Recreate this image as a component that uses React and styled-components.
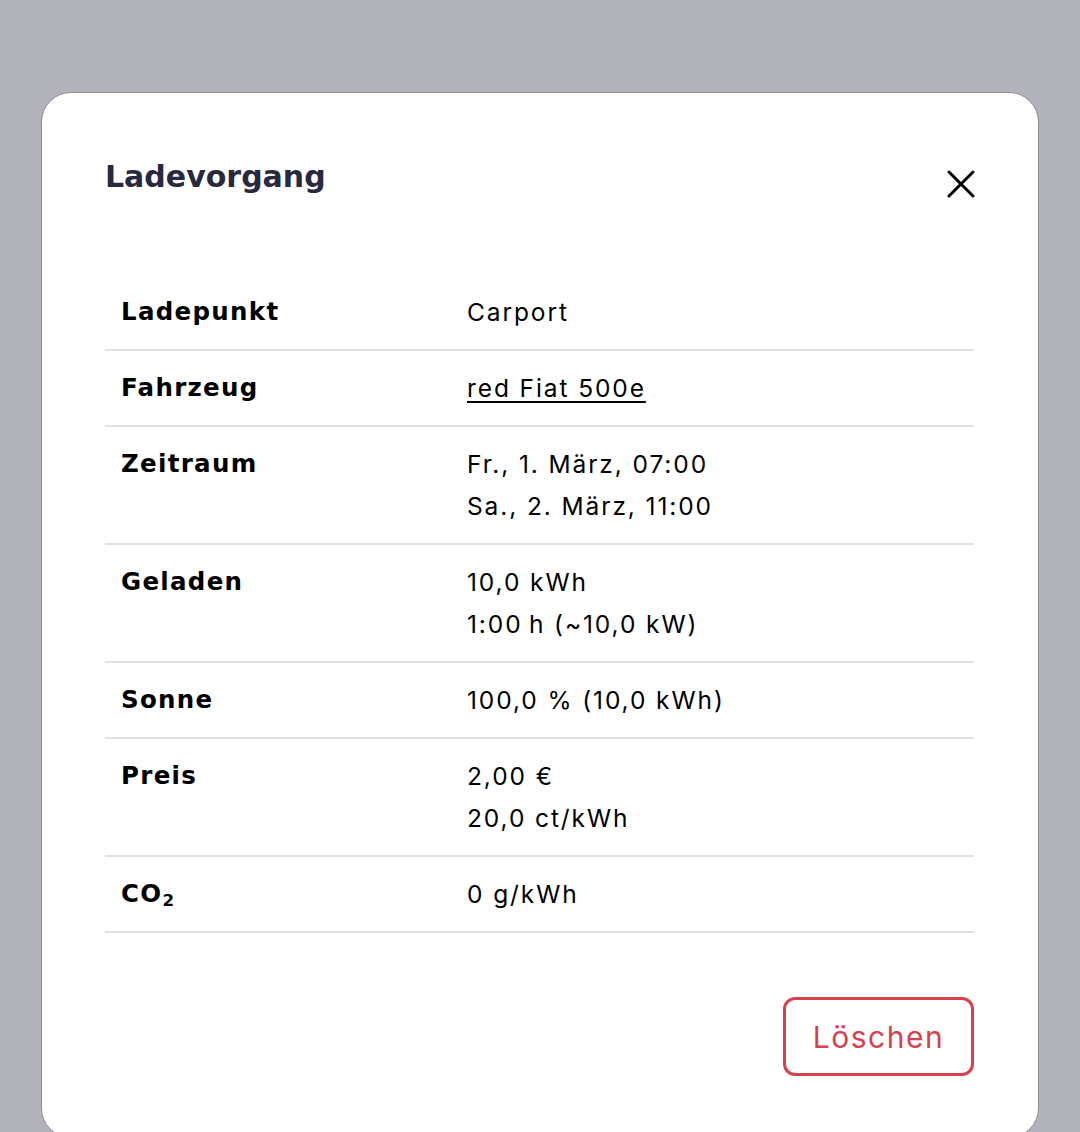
import React from 'react'
import styled, { createGlobalStyle } from 'styled-components'

const GlobalStyle = createGlobalStyle`
body {
  margin: 0;
  background: #b2b3ba;
  font-family: Inter, "Noto Sans", sans-serif;
  overflow: hidden;
}
`

const Backdrop = styled.div`
height: 1132px;
padding: 92px 41px 0 41px;
box-sizing: border-box;
overflow: hidden;
`

const Modal = styled.div`
background: #fff;
border: 1.5px solid #8d8e93;
border-radius: 30px;
padding: 0 64px 40px 63px;
min-height: 1046px;
box-sizing: border-box;
`

const Header = styled.div`
display: flex;
justify-content: space-between;
align-items: flex-start;
padding-top: 64px;
margin-bottom: 77px;
`

const Title = styled.h2`
margin: 0;
font-family: "DejaVu Sans", Inter, sans-serif;
font-size: 30px;
line-height: 40px;
font-weight: 700;
color: #28293e;
`

const Close = styled.button`
background: none;
border: none;
padding: 0;
margin-top: 13px;
margin-right: -1px;
width: 28px;
height: 28px;
display: flex;
align-items: center;
justify-content: center;
cursor: pointer;
`

const Table = styled.div`
display: flex;
flex-direction: column;
`

const Row = styled.div`
display: grid;
grid-template-columns: 346px 1fr;
padding: 16px 16px;
border-bottom: 2px solid #e1e1e3;
font-size: 24px;
line-height: 42px;
color: #000;
`

const Label = styled.div`
font-family: "DejaVu Sans", Inter, sans-serif;
font-size: 24.5px;
font-weight: 700;
letter-spacing: 1.3px;
`

const Sub = styled.sub`
font-size: 0.68em;
line-height: 0;
vertical-align: -0.25em;
letter-spacing: 0;
`

const Value = styled.div`
display: flex;
flex-direction: column;
font-size: 24.5px;
letter-spacing: 1.9px;
`

const Link = styled.a`
color: #000;
text-decoration: underline;
text-underline-offset: 4px;
text-decoration-thickness: 2px;
align-self: flex-start;
`

const Footer = styled.div`
display: flex;
justify-content: flex-end;
margin-top: 64px;
`

const DeleteButton = styled.button`
width: 191px;
height: 79px;
border: 3px solid #d9404d;
border-radius: 12px;
background: #fff;
color: #d9404d;
font-family: Inter, "Noto Sans", sans-serif;
font-size: 30px;
letter-spacing: 1.5px;
cursor: pointer;
`

const rows = [
  { label: 'Ladepunkt', values: ['Carport'] },
  { label: 'Fahrzeug', values: ['red Fiat 500e'], link: true },
  { label: 'Zeitraum', values: ['Fr., 1. März, 07:00', 'Sa., 2. März, 11:00'] },
  { label: 'Geladen', values: ['10,0 kWh', '1:00\u2009h (~10,0 kW)'] },
  { label: 'Sonne', values: ['100,0 % (10,0 kWh)'] },
  { label: 'Preis', values: ['2,00 €', '20,0 ct/kWh'] },
  { label: <>CO<Sub>2</Sub></>, key: 'co2', values: ['0 g/kWh'] },
]

const App = () => {
  return (
    <>
      <GlobalStyle />
      <Backdrop>
        <Modal>
          <Header>
            <Title>Ladevorgang</Title>
            <Close aria-label="Schließen">
              <svg width="28" height="28" viewBox="0 0 28 28">
                <path d="M2 2 L26 26 M26 2 L2 26" stroke="#000" strokeWidth="3" strokeLinecap="round" />
              </svg>
            </Close>
          </Header>
          <Table>
            {rows.map((row) => (
              <Row key={row.key || row.label}>
                <Label>{row.label}</Label>
                <Value>
                  {row.link ? (
                    <Link href="#">{row.values[0]}</Link>
                  ) : (
                    row.values.map((v) => <span key={v}>{v}</span>)
                  )}
                </Value>
              </Row>
            ))}
          </Table>
          <Footer>
            <DeleteButton>Löschen</DeleteButton>
          </Footer>
        </Modal>
      </Backdrop>
    </>
  )
}

export default App
